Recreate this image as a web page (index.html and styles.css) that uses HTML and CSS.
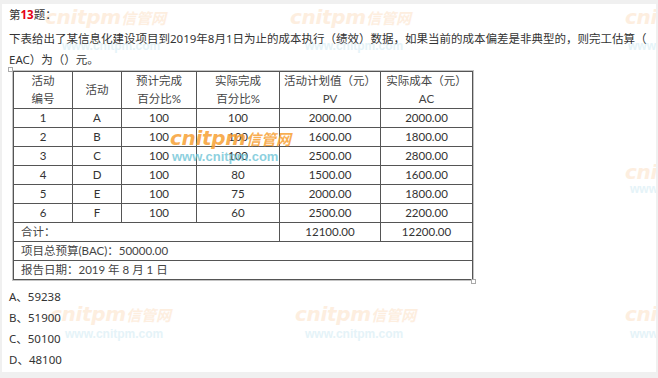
FILE: index.html
```html
<!DOCTYPE html>
<html lang="zh-CN">
<head>
<meta charset="utf-8">
<title>第13题</title>
<link rel="stylesheet" href="styles.css">
</head>
<body>
<div class="panel">
  <div class="wm wm-o faint" style="left:43px;top:3px">cnitpm<span>信管网</span></div>
  <div class="wm wm-b faint" style="left:60px;top:36px">www.cnitpm.com</div>
  <div class="wm wm-o faint" style="left:288px;top:3px">cnitpm<span>信管网</span></div>
  <div class="wm wm-b faint" style="left:303px;top:36px">www.cnitpm.com</div>
  <div class="wm wm-o faint" style="left:623px;top:3px">cnitpm<span>信管网</span></div>
  <div class="wm wm-b faint" style="left:626px;top:36px">www.cnitpm.com</div>
  <div class="wm wm-o faint" style="left:623px;top:158px">cnitpm<span>信管网</span></div>
  <div class="wm wm-b faint" style="left:628px;top:179px">www.cnitpm.com</div>
  <div class="wm wm-o faint" style="left:48px;top:300px">cnitpm<span>信管网</span></div>
  <div class="wm wm-b faint" style="left:63px;top:324px">www.cnitpm.com</div>
  <div class="wm wm-o faint" style="left:293px;top:300px">cnitpm<span>信管网</span></div>
  <div class="wm wm-b faint" style="left:303px;top:324px">www.cnitpm.com</div>
  <div class="wm wm-o faint" style="left:623px;top:300px">cnitpm<span>信管网</span></div>
  <div class="wm wm-b faint" style="left:628px;top:324px">www.cnitpm.com</div>

  <div class="content">
    <div class="title">第<b class="num">13</b>题：</div>
    <p class="question">下表给出了某信息化建设项目到2019年8月1日为止的成本执行（绩效）数据，如果当前的成本偏差是非典型的，则完工估算（<br>EAC）为（）元。</p>

    <div class="table-wrap">
      <span class="handle handle-tl"></span>
      <table class="data">
        <colgroup>
          <col class="c1"><col class="c2"><col class="c3"><col class="c4"><col class="c5"><col class="c6">
        </colgroup>
        <thead>
          <tr class="head">
            <th>活动<br>编号</th>
            <th>活动</th>
            <th>预计完成<br>百分比%</th>
            <th>实际完成<br>百分比%</th>
            <th>活动计划值（元）<br>PV</th>
            <th>实际成本（元）<br>AC</th>
          </tr>
        </thead>
        <tbody>
          <tr><td>1</td><td>A</td><td>100</td><td>100</td><td>2000.00</td><td>2000.00</td></tr>
          <tr><td>2</td><td>B</td><td>100</td><td>100</td><td>1600.00</td><td>1800.00</td></tr>
          <tr><td>3</td><td>C</td><td>100</td><td>100</td><td>2500.00</td><td>2800.00</td></tr>
          <tr><td>4</td><td>D</td><td>100</td><td>80</td><td>1500.00</td><td>1600.00</td></tr>
          <tr><td>5</td><td>E</td><td>100</td><td>75</td><td>2000.00</td><td>1800.00</td></tr>
          <tr><td>6</td><td>F</td><td>100</td><td>60</td><td>2500.00</td><td>2200.00</td></tr>
          <tr><td colspan="4" class="left">合计：</td><td>12100.00</td><td>12200.00</td></tr>
          <tr><td colspan="6" class="left">项目总预算(BAC)：50000.00</td></tr>
          <tr><td colspan="6" class="left">报告日期：2019 年 8 月 1 日</td></tr>
        </tbody>
      </table>
      <span class="handle handle-br"></span>
      <div class="wm wm-o strong" style="left:157px;top:57px">cnitpm<span>信管网</span></div>
      <div class="wm wm-b strong" style="left:159px;top:79px">www.cnitpm.com</div>
    </div>

    <ul class="options">
      <li>A、59238</li>
      <li>B、51900</li>
      <li>C、50100</li>
      <li>D、48100</li>
    </ul>
  </div>
</div>
</body>
</html>
```

FILE: styles.css
```css
html, body {
  margin: 0;
  padding: 0;
}
body {
  background: #f0f0f0;
  width: 658px;
  height: 378px;
  overflow: hidden;
  font-family: "Noto Sans", "Noto Sans CJK SC", sans-serif;
  color: #333;
}
.panel {
  position: relative;
  margin: 4px 2px 0 2px;
  height: 368px;
  background: #fff;
  overflow: hidden;
  box-sizing: border-box;
  padding-left: 7px;
}
.content {
  position: relative;
  z-index: 1;
}
.title {
  font-size: 11.5px;
  line-height: 21px;
}
.title .num {
  color: #e60012;
  font-weight: bold;
  font-family: "Noto Sans", sans-serif;
}
.question {
  margin: 3px 0 0 0;
  font-size: 11.5px;
  line-height: 21px;
  white-space: nowrap;
}
.table-wrap {
  position: relative;
  margin: 1px 0 0 4px;
  width: 459px;
}
.data {
  border-collapse: collapse;
  table-layout: fixed;
  width: 459px;
  background: #fff;
  outline: 1px solid #c4c4c4;
  font-family: Lato, "Noto Sans CJK SC", sans-serif;
  font-size: 11.5px;
  color: #333;
}
.c1 { width: 59px; }
.c2 { width: 49px; }
.c3 { width: 75px; }
.c4 { width: 83px; }
.c5 { width: 101px; }
.c6 { width: 92px; }
.data th,
.data td {
  border: 1px solid #555;
  padding: 0;
  text-align: center;
  vertical-align: middle;
}
.data th {
  font-weight: normal;
  line-height: 18px;
  color: #444;
}
.data tr.head {
  height: 37px;
}
.data tbody tr {
  height: 19px;
}
.data td {
  line-height: 16px;
}
.data td.left {
  text-align: left;
  padding-left: 7px;
  color: #444;
}
.handle {
  position: absolute;
  width: 3px;
  height: 3px;
  border: 1px solid #aaa;
  background: #fff;
  z-index: 2;
}
.handle-tl {
  left: -5px;
  top: -4px;
}
.handle-br {
  right: -4px;
  bottom: -4px;
}
.wm {
  position: absolute;
  white-space: nowrap;
  font-weight: bold;
  pointer-events: none;
}
.wm-o {
  font-family: "DejaVu Sans", sans-serif;
  font-style: italic;
  font-size: 20px;
  line-height: 20px;
  letter-spacing: -0.3px;
}
.wm-o span {
  font-family: "Noto Sans CJK SC", sans-serif;
  font-size: 15px;
  letter-spacing: 0;
}
.wm-b {
  font-family: "Liberation Sans", Arial, sans-serif;
  font-size: 12px;
  line-height: 12px;
}
.wm-o.faint { color: #fdeedf; }
.wm-b.faint { color: #e5f3f8; }
.wm.strong { z-index: 3; }
.wm-o.strong { color: rgba(247, 160, 50, 0.85); }
.wm-b.strong { color: rgba(110, 196, 214, 0.8); font-size: 13px; line-height: 13px; }
.options {
  list-style: none;
  margin: 6px 0 0 0;
  padding: 0;
  font-size: 11.5px;
  line-height: 21px;
}
```
